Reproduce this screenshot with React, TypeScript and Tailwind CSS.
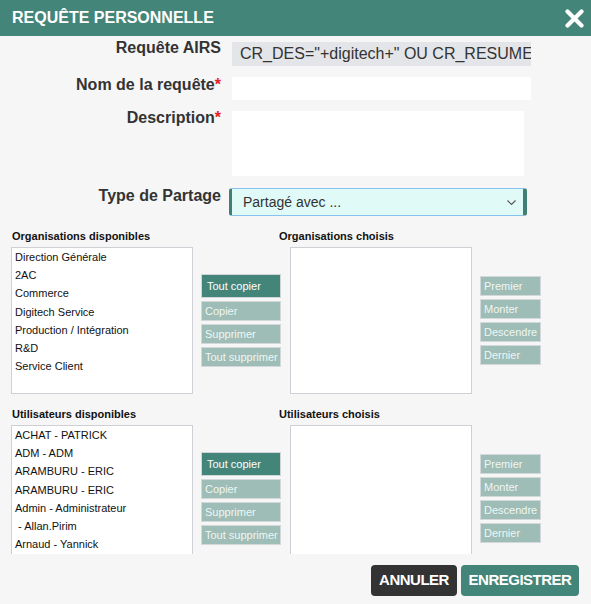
import React from "react";

const orgs = [
  "Direction Générale",
  "2AC",
  "Commerce",
  "Digitech Service",
  "Production / Intégration",
  "R&D",
  "Service Client",
];

const users = [
  "ACHAT - PATRICK",
  "ADM - ADM",
  "ARAMBURU - ERIC",
  "ARAMBURU - ERIC",
  "Admin - Administrateur",
  " - Allan.Pirim",
  "Arnaud - Yannick",
];

const Label = ({ text, required }: { text: string; required?: boolean }) => (
  <div className="w-[221px] shrink-0 text-right text-[16px] leading-[18px] font-bold text-[#333]">
    {text}
    {required && <span className="text-[#e8202a]">*</span>}
  </div>
);

const MoveButtons = () => (
  <div className="flex flex-col gap-[3px] w-[80px] text-[11px] leading-none">
    <div className="h-[24px] flex items-center pl-[5px] bg-[#44857a] text-white border border-[#cfd5d8]">
      Tout copier
    </div>
    {["Copier", "Supprimer", "Tout supprimer"].map((t) => (
      <div
        key={t}
        className="h-[20px] flex items-center pl-[3px] bg-[#9dbdb6] text-[#f1f6f4] border border-[#d3d8db] whitespace-nowrap"
      >
        {t}
      </div>
    ))}
  </div>
);

const OrderButtons = () => (
  <div className="flex flex-col gap-[3px] w-[61px] text-[11px] leading-none">
    {["Premier", "Monter", "Descendre", "Dernier"].map((t) => (
      <div
        key={t}
        className="h-[20px] flex items-center pl-[3px] bg-[#9dbdb6] text-[#f1f6f4] border border-[#d3d8db] whitespace-nowrap"
      >
        {t}
      </div>
    ))}
  </div>
);

const DualList = ({
  left,
  right,
  items,
  className,
}: {
  left: string;
  right: string;
  items: string[];
  className?: string;
}) => (
  <div className={className}>
    <div className="flex text-[11px] leading-[14px] font-bold text-[#111]">
      <div className="w-[279px] pl-[12px]">{left}</div>
      <div>{right}</div>
    </div>
    <div className="flex items-center pl-[11px] mt-[4px]">
      <div className="w-[182px] h-[147px] bg-white border border-[#cfcfd6] pl-[3px] overflow-hidden text-[11px] leading-[18.2px] text-[#111]">
        {items.map((o, i) => (
          <div key={i} className="whitespace-pre">
            {o}
          </div>
        ))}
      </div>
      <div className="ml-[8px]">
        <MoveButtons />
      </div>
      <div className="ml-[9px] w-[182px] h-[147px] bg-white border border-[#cfcfd6]" />
      <div className="ml-[8px]">
        <OrderButtons />
      </div>
    </div>
  </div>
);

export default function App() {
  return (
    <div className="w-[591px] h-[604px] flex flex-col bg-[#f6f6f6] font-['Liberation_Sans',Arial,sans-serif] overflow-hidden">
      <div className="h-[36px] shrink-0 bg-[#44857a] flex items-center justify-between pl-[12px] pr-[7px]">
        <span className="text-white font-bold text-[16px] leading-none">REQUÊTE PERSONNELLE</span>
        <svg width="19" height="19" viewBox="0 0 19 19" className="mt-px">
          <path d="M2.5 2.5 L16.5 16.5 M16.5 2.5 L2.5 16.5" stroke="white" strokeWidth="4.2" strokeLinecap="round" />
        </svg>
      </div>

      <div className="h-[518px] shrink-0 overflow-hidden">
        <div className="flex items-start mt-[3px]">
          <Label text="Requête AIRS" />
          <div className="ml-[11px] mt-[3px] w-[299px] h-[24px] bg-[#e3e5e8] pl-[8px] text-[16px] leading-[24px] text-[#333] whitespace-nowrap overflow-hidden">
            CR_DES="+digitech+" OU CR_RESUME
          </div>
        </div>

        <div className="flex items-start mt-[10px]">
          <Label text="Nom de la requête" required />
          <div className="ml-[11px] mt-px w-[299px] h-[23px] bg-white" />
        </div>

        <div className="flex items-start mt-[9px]">
          <Label text="Description" required />
          <div className="ml-[11px] mt-[2px] w-[292px] h-[65px] bg-white" />
        </div>

        <div className="flex items-start mt-[11px]">
          <Label text="Type de Partage" />
          <div className="ml-[8px] mt-[1px] w-[298px] h-[28px] bg-[#e0faf8] border-y border-[#86c3ee] border-l-[3px] border-l-[#3f7f74] border-r-[4px] border-r-[#3f7f74] rounded-[3px] flex items-center justify-between pl-[11px] pr-[7px]">
            <span className="text-[14px] text-[#333] leading-none">Partagé avec ...</span>
            <svg width="9" height="5" viewBox="0 0 9 5">
              <path d="M0.5 0.5 L4.5 4.5 L8.5 0.5" fill="none" stroke="#555" strokeWidth="1.1" />
            </svg>
          </div>
        </div>

        <DualList
          className="mt-[13px]"
          left="Organisations disponibles"
          right="Organisations choisis"
          items={orgs}
        />
        <DualList
          className="mt-[13px]"
          left="Utilisateurs disponibles"
          right="Utilisateurs choisis"
          items={users}
        />
      </div>

      <div className="flex-1 flex justify-end items-start pt-[11px] pr-[12px] gap-[4px]">
        <button className="w-[86px] h-[31px] rounded-[4px] bg-[#333333] text-white font-bold text-[15px] tracking-[-0.5px]">
          ANNULER
        </button>
        <button className="w-[118px] h-[31px] rounded-[4px] bg-[#44857a] text-white font-bold text-[15px] tracking-[-0.5px]">
          ENREGISTRER
        </button>
      </div>
    </div>
  );
}
